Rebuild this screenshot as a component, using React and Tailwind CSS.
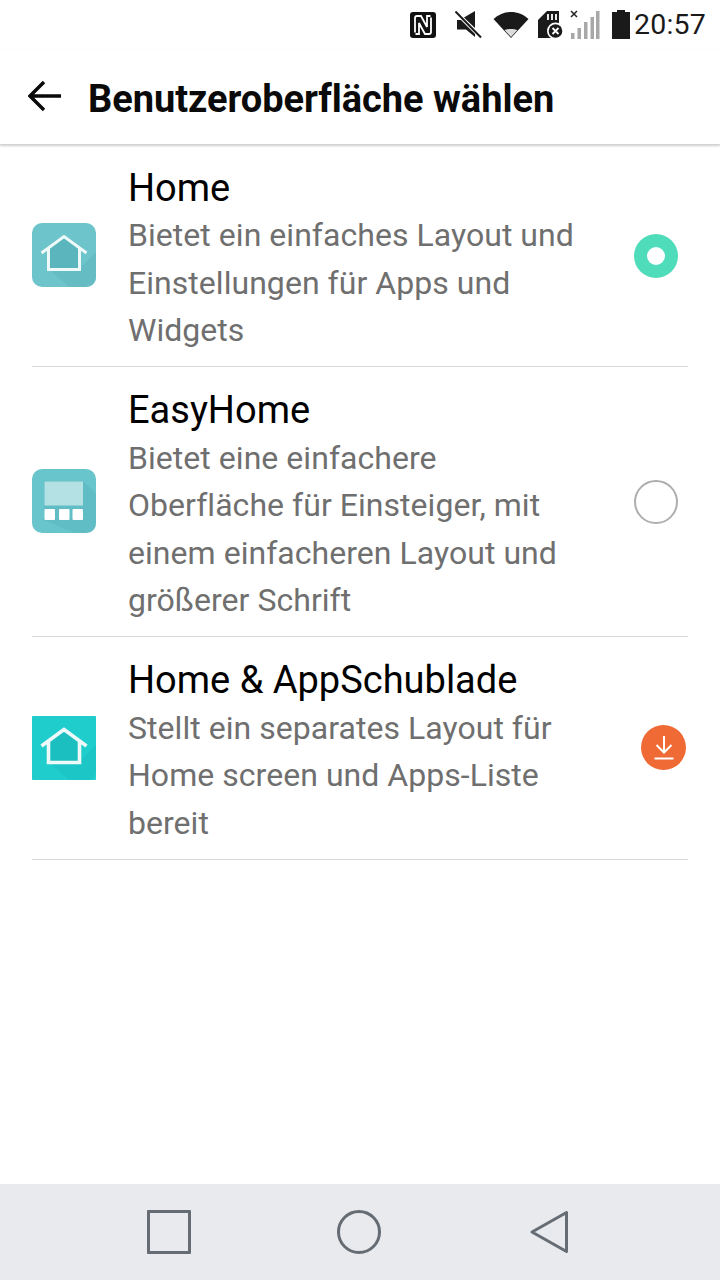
import React from 'react';

const items = [
  {
    title: 'Home',
    lines: ['Bietet ein einfaches Layout und', 'Einstellungen für Apps und', 'Widgets'],
    icon: 'home',
    control: 'on',
  },
  {
    title: 'EasyHome',
    lines: ['Bietet eine einfachere', 'Oberfläche für Einsteiger, mit', 'einem einfacheren Layout und', 'größerer Schrift'],
    icon: 'easy',
    control: 'off',
  },
  {
    title: 'Home & AppSchublade',
    lines: ['Stellt ein separates Layout für', 'Home screen und Apps-Liste', 'bereit'],
    icon: 'drawer',
    control: 'download',
  },
];

function StatusIcons() {
  return (
    <div className="flex items-center pl-[409px]">
      {/* NFC */}
      <svg width="28" height="28" viewBox="0 0 28 28">
        <rect x="1" y="1" width="26" height="26" rx="3" fill="#111" />
        <path d="M6 21.5 V7 Q6 5 8 5 H12 L18 16 M22 6.5 V21 Q22 23 20 23 H16 L10 12 V23 H6.5 M18 16 V5 H21.5" stroke="#fff" strokeWidth="1.8" fill="none" />
      </svg>
      {/* mute */}
      <svg width="28" height="28" viewBox="0 0 28 28" className="ml-[17px]">
        <path d="M3 9 H7 L21 23 V26 L12 18.5 H3 Z M10 6.5 L21 0 V17 Z" fill="#1a1a1a" />
        <path d="M1.5 0.5 L27 26.5" stroke="#1a1a1a" strokeWidth="2" />
      </svg>
      {/* wifi */}
      <svg width="36" height="28" viewBox="0 0 36 28" className="ml-[11px]">
        <path d="M0.5 8 C10 -1.5 26 -1.5 35.5 8 L18 27 Z" fill="#1a1a1a" />
        <path d="M11.5 19 C15 17.5 21 17.5 24.5 19 L18 26 Z" fill="#dcdcdc" />
      </svg>
      {/* sd card with error badge */}
      <svg width="28" height="30" viewBox="0 0 28 30" className="ml-[9px]">
        <path d="M9 1 H21 V28 H0 V10 Z" fill="#1a1a1a" />
        <path d="M10 4 V10 M14 4 V10 M18 4 V10" stroke="#fff" strokeWidth="1.8" />
        <circle cx="17.5" cy="21" r="8.5" fill="#fff" />
        <circle cx="17.5" cy="21" r="6.8" fill="#1a1a1a" />
        <path d="M14.5 18 L20.5 24 M20.5 18 L14.5 24" stroke="#fff" strokeWidth="1.8" />
      </svg>
      {/* signal, no sim */}
      <svg width="30" height="30" viewBox="0 0 30 30" className="ml-[4px]">
        <path d="M1 1 L7 7 M7 1 L1 7" stroke="#222" strokeWidth="1.5" />
        <path d="M1 23 V29 H4.5 V23 Z M7.5 18 V29 H11 V18 Z M14 12 V29 H17.5 V12 Z M20.5 7 V29 H24 V7 Z M26 1 V29 H29.5 V1 Z" fill="#a8a8a8" />
      </svg>
      {/* battery */}
      <svg width="20" height="30" viewBox="0 0 20 30" className="ml-[11px]">
        <path d="M6 0 H14 V2 H19 V29 H1 V2 H6 Z" fill="#1a1a1a" />
      </svg>
    </div>
  );
}

function RowIcon({ type }) {
  if (type === 'easy') {
    return (
      <svg width="64" height="64" viewBox="1 1 64 64" className="block">
        <rect x="1" y="1" width="64" height="64" rx="10" fill="#69c5cc" />
        <path d="M52 13 L65 26 V55 C65 61 61 65 55 65 H44 L13 52 V13 Z" fill="#5ab7bf" opacity="0.6" />
        <rect x="13.5" y="13.5" width="38.5" height="24" fill="#b3e1e4" />
        <rect x="13.5" y="41" width="10.5" height="11" rx="1" fill="#fff" />
        <rect x="28" y="41" width="10.5" height="11" rx="1" fill="#fff" />
        <rect x="41.5" y="41" width="10.5" height="11" rx="1" fill="#fff" />
      </svg>
    );
  }
  const square = type === 'drawer';
  return (
    <svg width="64" height="64" viewBox="1 1 64 64" className="block">
      <rect x="1" y="1" width="64" height="64" rx={square ? 1 : 10} fill={square ? '#1fcdcc' : '#6dc4ca'} />
      <path d="M18 47 H48 L65 30 V55 C65 61 61 65 55 65 H38 Z" fill={square ? '#1cc3c3' : '#62b9c0'} opacity="0.7" />
      <path d="M17 26 L33 14 L49 26 V47 H17 Z" fill={square ? '#1bbfc0' : '#5ab5bd'} />
      <path d="M10.5 31 L33 14.5 L55.5 31 M17.5 26 V47.5 H48.5 V26" fill="none" stroke="#eef9f9" strokeWidth={square ? 3.6 : 3} />
    </svg>
  );
}

function Control({ type }) {
  if (type === 'on') {
    return (
      <div className="w-11 h-11 rounded-full bg-[#4fdcbb] flex items-center justify-center">
        <div className="w-[18px] h-[18px] rounded-full bg-white" />
      </div>
    );
  }
  if (type === 'off') {
    return <div className="w-11 h-11 rounded-full border-2 border-[#aeaeae]" />;
  }
  return (
    <div className="w-[45px] h-[45px] rounded-full bg-[#ef6a35] flex items-center justify-center ml-[7px] -mt-px">
      <svg width="22" height="26" viewBox="0 0 22 26">
        <path d="M11 1 V17 M3.5 10 L11 17.5 L18.5 10 M1.5 23.5 H20.5" fill="none" stroke="#fff" strokeWidth="2" />
      </svg>
    </div>
  );
}

export default function App() {
  return (
    <div className="w-[720px] h-[1280px] bg-white flex flex-col font-['Roboto',sans-serif] overflow-hidden">
      {/* Status bar */}
      <div className="h-[50px] flex items-center justify-between pr-[14px]">
        <StatusIcons />
        <span className="text-[28.5px] text-[#1a1a1a] leading-none tracking-[0.2px]">20:57</span>
      </div>

      {/* Title bar */}
      <div className="h-[95px] flex items-center pl-[28px] border-b border-[#d4d4d4] shadow-[0_1px_2px_rgba(0,0,0,0.2)]">
        <svg width="34" height="32" viewBox="0 0 34 32" className="shrink-0 -mt-[2px]">
          <path d="M33 16 H3 M16 2 L2 16 L16 30" fill="none" stroke="#0a0a0a" strokeWidth="3.4" />
        </svg>
        <h1 className="ml-[26px] mt-[3px] text-[38px] font-bold leading-none text-[#0a0a0a] tracking-[-0.04px]">Benutzeroberfläche wählen</h1>
      </div>

      {/* Options */}
      <div className="flex-1 px-8">
        {items.map((item) => (
          <div key={item.title} className="flex items-center border-b border-[#d9d9d9]">
            <div className="w-24 shrink-0 -mt-px">
              <RowIcon type={item.icon} />
            </div>
            <div className="flex-1 pt-[19.8px] pb-[11.65px]">
              <div className="text-[38px] leading-[47.5px] text-black">{item.title}</div>
              {item.lines.map((line) => (
                <div key={line} className="text-[32px] leading-[47.5px] text-[#6f6f6f] tracking-[0.04px]">{line}</div>
              ))}
            </div>
            <div className="w-[54px] shrink-0">
              <Control type={item.control} />
            </div>
          </div>
        ))}
      </div>

      {/* Navigation bar */}
      <div className="h-24 bg-[#e8eaed] flex items-center pl-[147px]">
        <div className="w-11 h-11 border-[3px] border-[#656c73] rounded-[1px]" />
        <div className="w-11 h-11 ml-[146px] rounded-full border-[3px] border-[#656c73]" />
        <svg width="40" height="44" viewBox="0 0 40 44" className="ml-[148px]">
          <path d="M37.5 2.5 V41.5 L3 22 Z" fill="none" stroke="#656c73" strokeWidth="3" strokeLinejoin="round" />
        </svg>
      </div>
    </div>
  );
}
